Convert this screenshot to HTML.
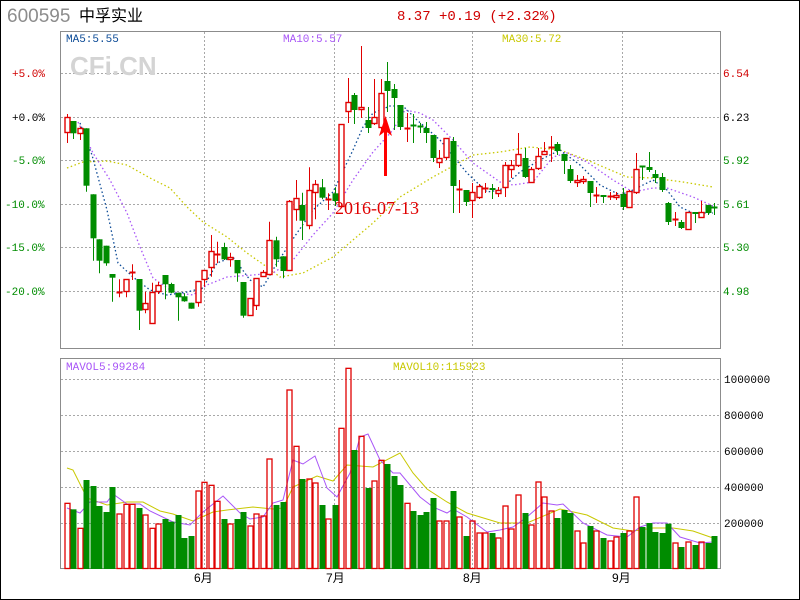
<!DOCTYPE html>
<html><head><meta charset="utf-8">
<style>
html,body{margin:0;padding:0;background:#fff;}
body{width:800px;height:600px;overflow:hidden;}
svg{display:block;}
text{font-family:"Liberation Mono","DejaVu Sans Mono",monospace;}
</style></head>
<body>
<svg id="s" width="800" height="600" xmlns="http://www.w3.org/2000/svg">
<rect x="0.5" y="0.5" width="799" height="599" fill="#fff" stroke="#000"/>
<text x="7" y="22" font-family="Liberation Sans,sans-serif" font-size="19" fill="#8c8c8c" style="font-family:'Liberation Sans',sans-serif">600595</text>
<text x="79" y="21" font-size="16" fill="#000" style="font-family:'Liberation Sans','Noto Sans CJK SC',sans-serif">中孚实业</text>
<text x="397" y="20" font-size="14" fill="#d00000" style="font-family:'Liberation Mono','Noto Sans CJK SC',monospace">8.37 +0.19 (+2.32%)</text>
<rect x="60.5" y="31.5" width="660" height="317" fill="#fff" stroke="#8c8c8c"/>
<rect x="60.5" y="358.5" width="660" height="210" fill="#fff" stroke="#8c8c8c"/>
<g id="grid" stroke="#a8a8a8" stroke-dasharray="2,2" stroke-width="1"></g>
<text x="70" y="75" font-size="26" font-weight="bold" fill="#d4d4d4" style="font-family:'Liberation Sans',sans-serif">CFi.CN</text>
<text x="66" y="42" font-size="11" fill="#0b4a96">MA5:5.55</text>
<text x="283" y="42" font-size="11" fill="#a855f7">MA10:5.57</text>
<text x="502" y="42" font-size="11" fill="#c8c800">MA30:5.72</text>
<text x="66" y="370" font-size="11" fill="#a855f7">MAVOL5:99284</text>
<text x="393" y="370" font-size="11" fill="#c8c800">MAVOL10:115923</text>
<g font-size="11">
<text x="12" y="77" fill="#d00000">+5.0%</text>
<text x="12" y="121" fill="#000">+0.0%</text>
<text x="12" y="164" fill="#008c00">-5.0%</text>
<text x="5" y="208" fill="#008c00">-10.0%</text>
<text x="5" y="251" fill="#008c00">-15.0%</text>
<text x="5" y="295" fill="#008c00">-20.0%</text>
<text x="723" y="77" fill="#d00000">6.54</text>
<text x="723" y="121" fill="#000">6.23</text>
<text x="723" y="164" fill="#008c00">5.92</text>
<text x="723" y="208" fill="#008c00">5.61</text>
<text x="723" y="251" fill="#008c00">5.30</text>
<text x="723" y="295" fill="#008c00">4.98</text>
<text x="724" y="383" fill="#000">1000000</text>
<text x="724" y="419" fill="#000">800000</text>
<text x="724" y="455" fill="#000">600000</text>
<text x="724" y="491" fill="#000">400000</text>
<text x="724" y="527" fill="#000">200000</text>
</g>
<g font-size="12" fill="#000" style="font-family:'Liberation Sans','Noto Sans CJK SC',sans-serif">
<text x="194" y="582" style="font-family:'Liberation Sans','Noto Sans CJK SC',sans-serif">6月</text>
<text x="326" y="582" style="font-family:'Liberation Sans','Noto Sans CJK SC',sans-serif">7月</text>
<text x="463" y="582" style="font-family:'Liberation Sans','Noto Sans CJK SC',sans-serif">8月</text>
<text x="612" y="582" style="font-family:'Liberation Sans','Noto Sans CJK SC',sans-serif">9月</text>
</g>
<g id="lines"></g>
<g id="c"></g>
<text x="335" y="214" font-size="18" fill="#e00000" style="font-family:'Liberation Serif',serif">2016-07-13</text>
<g fill="#ff0000"><rect x="384" y="126" width="3" height="50"/><polygon points="385.5,116 379,136 385.5,131 392,136"/></g>
</svg>
<script>
var NS="http://www.w3.org/2000/svg";
function el(p,t,a){var e=document.createElementNS(NS,t);for(var k in a)e.setAttribute(k,a[k]);p.appendChild(e);return e;}
var g=document.getElementById('grid');
[73,117,160,204,247,291].forEach(function(y){el(g,'line',{x1:61,x2:720,y1:y+.5,y2:y+.5});});
[379,415,451,487,523].forEach(function(y){el(g,'line',{x1:61,x2:720,y1:y+.5,y2:y+.5});});
[204,334,472,622].forEach(function(x){el(g,'line',{x1:x+.5,x2:x+.5,y1:32,y2:348});el(g,'line',{x1:x+.5,x2:x+.5,y1:359,y2:568});});
var R="#e00000",G="#008c00";
var C=[
[117.3,132.3,114,143,'r'],[121,133.3,121,139,'g'],[128.3,133.3,126.7,140,'r'],[128.3,185.7,128.3,191.7,'g'],[194.3,238.3,194.3,260.7,'g'],
[239.3,260.7,239.3,273.3,'g'],[245.7,263.3,245.7,265.7,'g'],[274,277.7,274,301.7,'g'],[291.7,292.7,279.3,297.3,'r'],[279.3,291.7,279.3,297.3,'r'],
[271.7,272.7,264.3,280,'r'],[279,310.7,279,330,'g'],[303.3,309.3,291.7,313.3,'r'],[291.7,322.3,282.7,322.3,'r'],[285.3,291.7,281.7,294,'r'],
[275,284.3,275,299.3,'g'],[284,292.7,282.7,293.3,'g'],[292.7,297.3,292.7,320.7,'g'],[296.3,301.3,293.3,301.7,'g'],[302.7,308.7,302.7,308.7,'g'],
[281,302.3,281,306.7,'r'],[270,278.7,270,286.7,'r'],[251,267.3,235,276.7,'r'],[254,254.7,241.7,263.3,'r'],[247,259.3,242.7,260,'g'],
[257.3,259,252.7,266.7,'r'],[260,273.3,260,281.7,'g'],[282,315.7,282,317.7,'g'],[298.3,315.3,298.3,315.3,'r'],[278.3,305.3,278.3,310,'r'],
[272.3,276,270,276.7,'r'],[240.3,274.3,221.7,274.3,'r'],[240.3,259.3,236.7,266.7,'g'],[256.3,271,256.3,278.3,'g'],[201.3,270.3,200,271,'r'],
[197.7,208.3,180,220.7,'r'],[205,220.7,192.7,240,'g'],[190.3,225.3,167.3,229.3,'r'],[184.3,192.3,180,219.3,'r'],[187.3,197.7,179,199.3,'g'],
[199,200,193.3,210,'r'],[193.3,201,187.3,206,'g'],[124.3,206,124,206.7,'r'],[102,111,78,123,'r'],[95,110,93,124,'g'],
[107,109,46,118,'r'],[120,128,107,133,'g'],[117,123,79,125,'r'],[93,127,79,130,'r'],[81,91,62,112,'g'],
[89,98,84,130,'g'],[105,127,105,130,'g'],[128,128,113,142,'r'],[125,125,114,143,'g'],[126,127,123,133,'g'],
[128,133,122,143,'g'],[135,158,135,162,'g'],[158,162,150,168,'r'],[138,157,138,160,'r'],[141,186,137,213,'g'],
[189,189,180,213,'r'],[190,202,190,206,'g'],[192,200,183,218,'r'],[186,197,184,199,'r'],[188,188,183,193,'r'],
[188,190,184,199,'g'],[190,193,187,197,'r'],[165,187,162,197,'r'],[165,169,160,178,'r'],[154,165,133,167,'r'],
[158,177,148,178,'g'],[169,182,167,183,'r'],[156,168,148,170,'r'],[151,154,142,155,'r'],[147,148,136,162,'r'],
[144,151,142,155,'g'],[154,161,154,174,'g'],[169,181,165,183,'g'],[180,182,175,187,'r'],[179,181,176,184,'r'],
[181,193,181,207,'g'],[195,196,187,203,'r'],[195,197,195,203,'g'],[196,197,192,200,'r'],[195,197,192,200,'r'],
[194,207,188,210,'g'],[191,207,190,207,'r'],[169,192,153,194,'r'],[166,167,166,180,'g'],[167,170,152,172,'g'],
[174,178,170,183,'g'],[177,190,173,192,'g'],[203,222,202,225,'g'],[219,219,212,226,'r'],[222,228,220,229,'g'],
[212,229,212,229,'r'],[212,214,212,223,'g'],[212,217,201,218,'r'],[205,213,205,215,'g'],[207,207,203,215,'g']];
var V=[490,508,565,420,438,498,516,441,522,493,493,504,525,565,552,537,545,525,594,588,453,427,436,484,537,552,537,516,558,522,528,357,495,486,150,319,417,417,429,495,537,495,265,85,330,289,444,423,361,372,408,435,490,513,525,516,474,543,543,453,531,588,543,579,579,579,594,498,567,465,519,555,426,471,513,534,510,519,573,609,558,573,594,603,591,579,573,471,561,549,576,579,551,609,621,606,615,606,609,588];
function ln(p,pts,col,dash,w){el(p,'polyline',{points:pts,fill:'none',stroke:col,'stroke-width':w||1,'stroke-dasharray':dash||''});}
var L=document.getElementById('lines');
ln(L,"67,168 83,162 107,161 127,165 150,178 170,188 187,207 203,222 227,237 247,253 267,267 280,277 303,273 333,257 353,240 373,223 400,197 433,177 473,155 500,152 530,147 560,150 587,160 627,177 653,178 683,182 713,187","#c8c800","1.5,2.5",1.3);
ln(L,"78,122 93,153 110,180 127,213 140,247 153,278 173,292 193,295 207,285 227,277 253,275 273,273 293,260 313,235 333,213 353,180 373,152 393,130 405,110 420,113 433,120 453,140 473,163 500,182 513,185 533,182 553,157 567,153 587,162 613,180 633,192 653,188 667,188 693,197 713,206","#a855f7","1.5,2.5",1.3);
ln(L,"80,123 92,155 107,210 118,263 133,277 150,290 167,295 187,292 203,288 217,263 233,257 250,280 263,287 277,263 297,233 313,210 333,192 353,150 363,127 373,113 390,106 403,106 417,120 440,140 467,173 487,192 500,190 520,172 540,160 560,150 580,165 600,185 620,195 633,190 653,180 667,190 680,207 693,213 713,213","#0b4a96","1.5,2.5",1.3);
ln(L,"67,468 73,470 87,498 107,505 127,502 143,502 160,511 173,514 193,521 213,512 227,510 253,507 273,509 283,508 293,487 317,476 333,481 347,465 373,467 400,453 413,473 427,489 447,502 467,513 500,523 527,523 560,509 587,515 613,528 633,531 653,528 673,528 693,531 713,538","#c8c800");
ln(L,"67,508 80,513 90,502 107,502 113,494 127,504 140,504 150,511 173,522 190,525 203,512 223,496 240,513 250,519 263,517 273,503 283,500 293,460 303,464 315,456 327,488 337,497 350,473 360,437 368,434 380,460 393,473 400,473 420,497 433,507 447,513 453,509 467,517 487,532 500,530 513,527 527,517 543,503 557,505 563,504 583,523 607,535 627,537 640,527 653,523 667,523 680,537 700,543 713,542","#a855f7");
var cg=document.getElementById('c');
C.forEach(function(d,i){
 var x=Math.round(66.7+6.54*i)+.5,col=d[4]=='r'?R:G,t=d[0],b=d[1];
 if(b-t<1.5){el(cg,'line',{x1:x,x2:x,y1:d[2],y2:d[3],stroke:col});el(cg,'line',{x1:x-3,x2:x+3,y1:Math.round(t)+.5,y2:Math.round(t)+.5,stroke:col,'stroke-width':2});}
 else if(d[4]=='r'){
  if(d[2]<t)el(cg,'line',{x1:x,x2:x,y1:d[2],y2:t,stroke:col});
  if(d[3]>b)el(cg,'line',{x1:x,x2:x,y1:b,y2:d[3],stroke:col});
  el(cg,'rect',{x:x-2.5,y:Math.round(t)+.5,width:5,height:Math.round(b-t),fill:'#fff',stroke:col,'stroke-width':1.4});
 } else {
  el(cg,'line',{x1:x,x2:x,y1:d[2],y2:d[3],stroke:col});
  el(cg,'rect',{x:x-3,y:t,width:6,height:b-t,fill:col});
 }
 var vt=340+V[i]/3;
 if(d[4]=='r')el(cg,'rect',{x:x-2.5,y:vt,width:5,height:569-vt-0.5,fill:'none',stroke:R,'stroke-width':1.3});
 else el(cg,'rect',{x:x-3,y:vt,width:6,height:569-vt,fill:G});
});
</script>
</body></html>
